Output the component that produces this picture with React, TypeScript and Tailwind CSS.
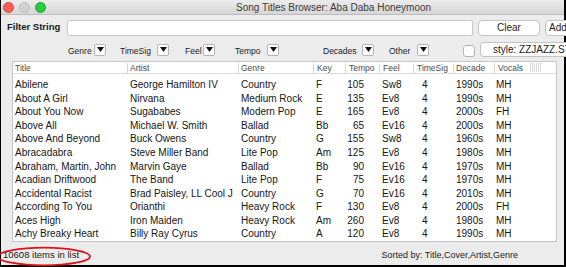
import React from "react";

type Song = {
  title: string;
  artist: string;
  genre: string;
  key: string;
  tempo: string;
  feel: string;
  timeSig: string;
  decade: string;
  vocals: string;
};

const songs: Song[] = [
  { title: "Abilene", artist: "George Hamilton IV", genre: "Country", key: "F", tempo: "105", feel: "Sw8", timeSig: "4", decade: "1990s", vocals: "MH" },
  { title: "About A Girl", artist: "Nirvana", genre: "Medium Rock", key: "E", tempo: "135", feel: "Ev8", timeSig: "4", decade: "1990s", vocals: "MH" },
  { title: "About You Now", artist: "Sugababes", genre: "Modern Pop", key: "E", tempo: "165", feel: "Ev8", timeSig: "4", decade: "2000s", vocals: "FH" },
  { title: "Above All", artist: "Michael W. Smith", genre: "Ballad", key: "Bb", tempo: "65", feel: "Ev16", timeSig: "4", decade: "2000s", vocals: "MH" },
  { title: "Above And Beyond", artist: "Buck Owens", genre: "Country", key: "G", tempo: "155", feel: "Sw8", timeSig: "4", decade: "1960s", vocals: "MH" },
  { title: "Abracadabra", artist: "Steve Miller Band", genre: "Lite Pop", key: "Am", tempo: "125", feel: "Ev8", timeSig: "4", decade: "1980s", vocals: "MH" },
  { title: "Abraham, Martin, John", artist: "Marvin Gaye", genre: "Ballad", key: "Bb", tempo: "90", feel: "Ev16", timeSig: "4", decade: "1970s", vocals: "MH" },
  { title: "Acadian Driftwood", artist: "The Band", genre: "Lite Pop", key: "F", tempo: "75", feel: "Ev16", timeSig: "4", decade: "1970s", vocals: "MH" },
  { title: "Accidental Racist", artist: "Brad Paisley, LL Cool J", genre: "Country", key: "G", tempo: "70", feel: "Ev16", timeSig: "4", decade: "2010s", vocals: "MH" },
  { title: "According To You", artist: "Orianthi", genre: "Heavy Rock", key: "F", tempo: "130", feel: "Ev8", timeSig: "4", decade: "2000s", vocals: "FH" },
  { title: "Aces High", artist: "Iron Maiden", genre: "Heavy Rock", key: "Am", tempo: "260", feel: "Ev8", timeSig: "4", decade: "1980s", vocals: "MH" },
  { title: "Achy Breaky Heart", artist: "Billy Ray Cyrus", genre: "Country", key: "A", tempo: "120", feel: "Ev8", timeSig: "4", decade: "1990s", vocals: "MH" },
];

const columns: { label: string; field: keyof Song; width: string; head: string; cell: string }[] = [
  { label: "Title", field: "title", width: "w-[114px]", head: "pl-[2px]", cell: "pl-[2px]" },
  { label: "Artist", field: "artist", width: "w-[111px]", head: "pl-[2px] border-l border-[#d6d6d6]", cell: "pl-[3px]" },
  { label: "Genre", field: "genre", width: "w-[75px]", head: "pl-[2px] border-l border-[#d6d6d6]", cell: "pl-[3px]" },
  { label: "Key", field: "key", width: "w-[32px]", head: "pl-[3px] border-l border-[#d6d6d6]", cell: "pl-[3px]" },
  { label: "Tempo", field: "tempo", width: "w-[34px]", head: "pl-[3px] border-l border-[#d6d6d6]", cell: "pr-[15px] text-right" },
  { label: "Feel", field: "feel", width: "w-[34px]", head: "pl-[3px] border-l border-[#d6d6d6]", cell: "pl-[3px]" },
  { label: "TimeSig", field: "timeSig", width: "w-[40px]", head: "pl-[3px] border-l border-[#d6d6d6]", cell: "pl-[9px]" },
  { label: "Decade", field: "decade", width: "w-[41px]", head: "pl-[2px] border-l border-[#d6d6d6]", cell: "pl-[3px]" },
  { label: "Vocals", field: "vocals", width: "w-[34px]", head: "pl-[3px] border-l border-[#d6d6d6]", cell: "pl-[2px]" },
];

function DropBox() {
  return (
    <div className="flex h-[12px] w-[12px] shrink-0 items-center justify-center rounded-[2px] border border-[#b4b4b4] bg-white">
      <svg width="7" height="5" viewBox="0 0 7 5">
        <path d="M0 0 H7 L3.5 5 Z" fill="#111" />
      </svg>
    </div>
  );
}

function DropFilter({ label, labelWidth, className }: { label: string; labelWidth: string; className: string }) {
  return (
    <div className={`flex items-center ${className}`}>
      <span className={`${labelWidth} shrink-0 pt-[3px] text-[8.5px] text-[#222]`}>{label}</span>
      <DropBox />
    </div>
  );
}

export default function App() {
  return (
    <div className="relative h-[267px] w-[566px] overflow-hidden bg-[#ececec] font-['Liberation_Sans',Arial,sans-serif]">
      <div className="flex h-full flex-col border-b-2 border-l border-r-2 border-black">
        {/* title bar */}
        <div className="flex h-[15px] shrink-0 items-center border-b border-[#bdbdbd] bg-gradient-to-b from-[#ececec] to-[#d6d6d6]">
          <div className="ml-[2px] flex gap-[5px]">
            <span className="h-[11px] w-[11px] rounded-full border border-[#e0443e] bg-[#fc5f57]" />
            <span className="h-[11px] w-[11px] rounded-full border border-[#bdbdbd] bg-[#d0d0d0]" />
            <span className="h-[11px] w-[11px] rounded-full border border-[#1dad2b] bg-[#2bc940]" />
          </div>
          <span className="ml-[190px] whitespace-nowrap text-[10px] text-[#3b3b3b]">
            Song Titles Browser: Aba Daba Honeymoon
          </span>
        </div>

        {/* filter string */}
        <div className="mt-[4px] flex h-[17px] shrink-0 items-center">
          <span className="ml-[6px] w-[60px] shrink-0 text-[9.5px] font-semibold text-[#222]">Filter String</span>
          <div className="h-[16px] w-[406px] shrink-0 rounded-[2px] border border-[#c8c8c8] bg-white" />
          <button className="ml-[5px] flex h-[16px] w-[62px] shrink-0 items-center justify-center rounded-[4px] border border-[#c4c4c4] bg-white text-[10px] text-[#222]">
            Clear
          </button>
          <button className="ml-[5px] flex h-[16px] w-[62px] shrink-0 items-center justify-start rounded-[4px] border border-[#c4c4c4] bg-white pl-[3px] text-[10px] text-[#222]">
            Add
          </button>
        </div>

        {/* dropdown filters */}
        <div className="mt-[6px] flex h-[15px] shrink-0 items-center">
          <DropFilter label="Genre" labelWidth="w-[26px]" className="ml-[67px]" />
          <DropFilter label="TimeSig" labelWidth="w-[37px]" className="ml-[14px]" />
          <DropFilter label="Feel" labelWidth="w-[18px]" className="ml-[16px]" />
          <DropFilter label="Tempo" labelWidth="w-[32px]" className="ml-[20px]" />
          <DropFilter label="Decades" labelWidth="w-[39px]" className="ml-[44px]" />
          <DropFilter label="Other" labelWidth="w-[28px]" className="ml-[15px]" />
          <div className="ml-[34px] mt-[3px] h-[12px] w-[12px] shrink-0 rounded-[3px] border border-[#b4b4b4] bg-white" />
          <button className="ml-[5px] flex h-[15px] w-[110px] shrink-0 items-center rounded-[4px] border border-[#c4c4c4] bg-white pl-[12px] text-[10px] text-[#222] whitespace-nowrap">
            style: ZZJAZZ.STY
          </button>
        </div>

        {/* song table */}
        <div className="ml-[11px] mt-[4px] w-[545px] shrink-0 overflow-hidden border border-[#c6c6c6] bg-white">
          <div className="flex h-[12px] items-center border-b border-[#dcdcdc] text-[8.5px] text-[#4a4a4a]">
            {columns.map((c) => (
              <div key={c.field} className={`${c.width} ${c.head} h-[10px] shrink-0 leading-[10px]`}>
                {c.label}
              </div>
            ))}
            <div className="ml-[2px] flex gap-[1px]">
              {[0, 1, 2, 3, 4, 5].map((i) => (
                <span key={i} className="h-[9px] w-px bg-[#dadada]" />
              ))}
            </div>
          </div>
          <div className="h-[4px]" />
          {songs.map((s) => (
            <div key={s.title} className="flex h-[13.55px] items-center text-[10px] text-[#151515]">
              {columns.map((c) => (
                <div key={c.field} className={`${c.width} ${c.cell} shrink-0 whitespace-nowrap overflow-hidden`}>
                  {s[c.field]}
                </div>
              ))}
            </div>
          ))}
        </div>

        {/* status */}
        <div className="flex flex-1 items-center justify-between pl-[2px] pr-[46px] pt-[4px] text-[9.5px] text-[#1a1a1a]">
          <span>10608 items in list</span>
          <span className="text-[9px]">Sorted by: Title,Cover,Artist,Genre</span>
        </div>
      </div>

      <svg className="absolute left-0 top-[246px]" width="96" height="21" viewBox="0 0 96 21">
        <ellipse cx="44" cy="10.5" rx="46" ry="8.8" fill="none" stroke="#d4161c" strokeWidth="1.8" />
      </svg>
    </div>
  );
}
